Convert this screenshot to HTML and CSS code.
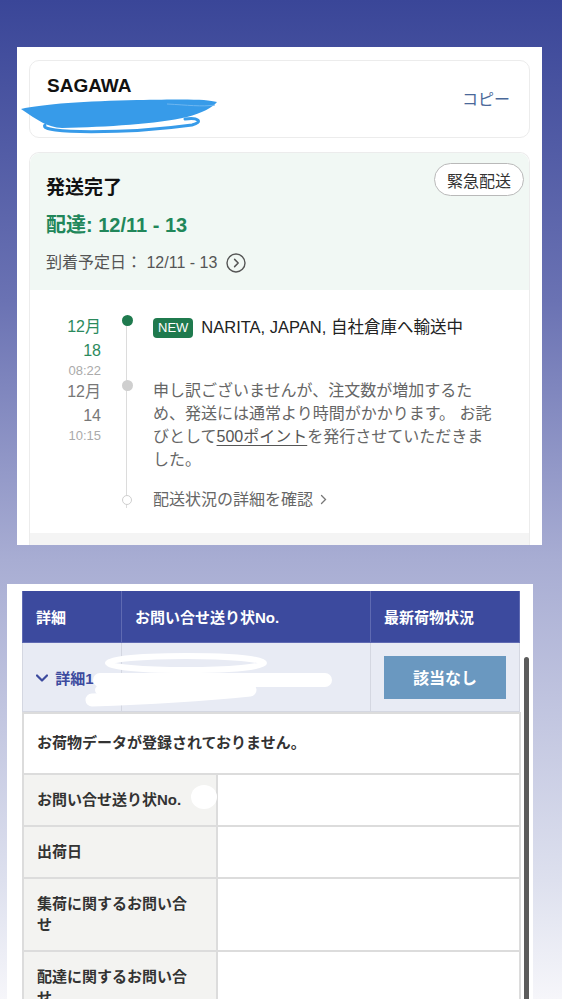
FILE: index.html
```html
<!DOCTYPE html>
<html lang="ja">
<head>
  <meta charset="UTF-8">
  <title>配送状況</title>
  <link rel="stylesheet" href="styles.css">
</head>
<body>
  <!-- first screenshot: carrier + tracking timeline -->
  <div class="shot shot-top">
    <div class="carrier-card">
      <div class="carrier-info">
        <div class="carrier-name">SAGAWA</div>
        <div class="carrier-number"></div>
      </div>
      <a class="copy-link">コピー</a>
    </div>

    <div class="status-card">
      <div class="status-head">
        <div class="status-top">
          <h2 class="status-title">発送完了</h2>
          <button class="urgent-btn">緊急配送</button>
        </div>
        <div class="status-delivery">配達: 12/11 - 13</div>
        <div class="status-eta">
          <span>到着予定日： 12/11 - 13</span>
          <svg class="eta-icon" width="20" height="20" viewBox="0 0 20 20">
            <circle cx="10" cy="10" r="9" fill="none" stroke="#555" stroke-width="1.4"/>
            <path d="M8.6 6.4 L12.2 10 L8.6 13.6" fill="none" stroke="#555" stroke-width="1.5" stroke-linecap="round" stroke-linejoin="round"/>
          </svg>
        </div>
      </div>

      <div class="timeline">
        <div class="event">
          <div class="event-date current">
            <span class="month">12月</span>
            <span class="day">18</span>
            <span class="time">08:22</span>
          </div>
          <div class="event-rail"><span class="dot dot-green"></span></div>
          <div class="event-body event-title"><span class="badge-new">NEW</span>NARITA, JAPAN, 自社倉庫へ輸送中</div>
        </div>

        <div class="event">
          <div class="event-date">
            <span class="month">12月</span>
            <span class="day">14</span>
            <span class="time">10:15</span>
          </div>
          <div class="event-rail"><span class="dot dot-gray"></span></div>
          <p class="event-body event-note">申し訳ございませんが、注文数が増加するた<br>め、発送には通常より時間がかかります。 お詫<br>びとして<u>500ポイント</u>を発行させていただきま<br>した。</p>
        </div>

        <div class="event event-more">
          <div class="event-date"></div>
          <div class="event-rail"><span class="dot dot-open"></span></div>
          <div class="event-body more-link">配送状況の詳細を確認
            <svg width="7" height="11" viewBox="0 0 7 11"><path d="M1.5 1.5 L5.5 5.5 L1.5 9.5" fill="none" stroke="#777" stroke-width="1.3" stroke-linecap="round"/></svg>
          </div>
        </div>
      </div>
      <div class="status-foot"></div>
    </div>

    <svg class="scribble scribble-blue" width="210" height="42" viewBox="0 0 210 42">
      <path d="M4 14 C 25 9, 70 6, 120 5 S 190 4, 200 7 C 195 13, 185 18, 170 22 C 140 29, 90 32, 45 33 C 30 32, 22 26, 4 14 Z" fill="#379be9"/>
      <path d="M28 30 C 20 39, 110 39, 175 30 C 187 27, 181 22, 168 24" fill="none" stroke="#379be9" stroke-width="3" stroke-linecap="round"/>
      <path d="M150 9 C 170 10, 185 12, 198 10" fill="none" stroke="#6db6f0" stroke-width="1"/>
    </svg>
  </div>

  <!-- second screenshot: carrier site table -->
  <div class="shot shot-bottom">
    <table class="summary">
      <colgroup><col class="c-detail"><col class="c-number"><col class="c-state"></colgroup>
      <thead>
        <tr>
          <th>詳細</th>
          <th>お問い合せ送り状No.</th>
          <th>最新荷物状況</th>
        </tr>
      </thead>
      <tbody>
        <tr>
          <td class="detail-toggle">
            <svg width="12" height="8" viewBox="0 0 12 8"><path d="M1 1.5 L6 6.5 L11 1.5" fill="none" stroke="#3c4a9e" stroke-width="2.2" stroke-linecap="round" stroke-linejoin="round"/></svg>
            <span>詳細1</span>
          </td>
          <td></td>
          <td><button class="state-btn">該当なし</button></td>
        </tr>
      </tbody>
    </table>

    <table class="detail">
      <colgroup><col class="c-label"><col class="c-value"></colgroup>
      <tr><td class="message" colspan="2">お荷物データが登録されておりません。</td></tr>
      <tr><th>お問い合せ送り状No.</th><td></td></tr>
      <tr><th>出荷日</th><td></td></tr>
      <tr><th>集荷に関するお問い合せ</th><td></td></tr>
      <tr><th>配達に関するお問い合せ</th><td></td></tr>
    </table>

    <div class="scrollbar"></div>

    <svg class="scribble scribble-white" width="526" height="420" viewBox="0 0 526 420">
      <ellipse cx="179" cy="79" rx="78" ry="7" fill="none" stroke="#fff" stroke-width="6"/>
      <path d="M93 96 L318 96" stroke="#fff" stroke-width="14" stroke-linecap="round"/>
      <path d="M93 106 L233 104" stroke="#fff" stroke-width="10" stroke-linecap="round"/>
      <path d="M85 116 C 143 114, 213 109, 243 106" stroke="#fff" stroke-width="13" fill="none" stroke-linecap="round"/>
      <ellipse cx="197" cy="213" rx="13" ry="12" fill="#fff"/>
    </svg>
  </div>
</body>
</html>
```

FILE: styles.css
```css
html,
body {
  height: 999px;
}

html {
  background: linear-gradient(180deg, #3a4698 0, #6a72b3 300px, #a8add3 560px, #dde0ee 880px, #f6f6fa 999px);
}

body {
  margin: 0;
  overflow: hidden;
  font-family: "Liberation Sans", "Noto Sans CJK JP", sans-serif;
  color: #222;
}

.shot {
  position: relative;
  background: #fff;
  box-sizing: border-box;
}

.scribble {
  position: absolute;
  pointer-events: none;
}

/* top screenshot */
.shot-top {
  margin: 47px 0 0 17px;
  width: 525px;
  height: 498px;
  padding: 13px 12px 0;
  overflow: hidden;
}

.scribble-blue {
  left: 0;
  top: 48px;
}

.carrier-card {
  display: flex;
  align-items: center;
  justify-content: space-between;
  border: 1px solid #ececec;
  border-radius: 10px;
  padding: 13px 19px 15px 17px;
}

.carrier-name {
  font-size: 19px;
  font-weight: bold;
  line-height: 24px;
  color: #111;
}

.carrier-number {
  height: 24px;
}

.copy-link {
  font-size: 16px;
  color: #4a6899;
}

.status-card {
  margin-top: 14px;
  border: 1px solid #ececec;
  border-bottom: none;
  border-radius: 10px 10px 0 0;
}

.status-head {
  background: #f1f8f4;
  border-radius: 10px 10px 0 0;
  padding: 10px 5px 15px 16px;
}

.status-top {
  display: flex;
  justify-content: space-between;
  align-items: flex-start;
}

.status-title {
  margin: 0;
  padding-top: 12px;
  font-size: 19px;
  line-height: 26px;
  color: #111;
}

.urgent-btn {
  height: 33px;
  padding: 0 12px;
  background: #fff;
  border: 1px solid #b9b9b9;
  border-radius: 17px;
  font-family: inherit;
  font-size: 16px;
  color: #333;
}

.status-delivery {
  margin-top: 10px;
  font-size: 20px;
  font-weight: bold;
  line-height: 28px;
  color: #21875a;
}

.status-eta {
  display: flex;
  align-items: center;
  margin-top: 12px;
  font-size: 16px;
  line-height: 24px;
  color: #555;
}

.eta-icon {
  margin-left: 9px;
}

.timeline {
  position: relative;
  padding: 25px 0 21px;
}

.timeline::before {
  content: '';
  position: absolute;
  left: 96px;
  top: 30px;
  bottom: 25px;
  width: 1px;
  background: #dcdcdc;
}

.event {
  display: flex;
  align-items: flex-start;
}

.event-date {
  width: 71px;
  flex-shrink: 0;
  display: flex;
  flex-direction: column;
  align-items: flex-end;
  color: #777;
}

.event-date.current {
  color: #2c8a5d;
}

.month {
  font-size: 16px;
  line-height: 24px;
}

.day {
  font-size: 16px;
  line-height: 23px;
}

.time {
  font-size: 13px;
  line-height: 18px;
  color: #aaa;
}

.event-rail {
  position: relative;
  width: 52px;
  flex-shrink: 0;
  display: flex;
  justify-content: center;
}

.dot {
  display: block;
  width: 11px;
  height: 11px;
  border-radius: 50%;
  box-sizing: border-box;
}

.dot-green {
  background: #1f7a4e;
}

.dot-gray {
  background: #cfcfcf;
}

.dot-open {
  width: 10px;
  height: 10px;
  margin-top: 7px;
  background: #fff;
  border: 1px solid #cfcfcf;
}

.event-body {
  flex: 1;
  margin: 0;
  font-size: 16px;
  line-height: 24px;
}

.event-title {
  font-size: 16.5px;
  color: #222;
}

.badge-new {
  display: inline-block;
  height: 20px;
  margin-right: 8px;
  padding: 0 5px;
  border-radius: 4px;
  background: #1f7a4e;
  color: #fff;
  font-size: 13px;
  line-height: 20px;
  vertical-align: 1px;
}

.event-note {
  margin-top: -1px;
  line-height: 23px;
  color: #666;
}

.event-note u {
  color: #555;
  text-underline-offset: 3px;
}

.event-more {
  margin-top: 17px;
}

.more-link {
  color: #666;
}

.more-link svg {
  margin-left: 3px;
}

.status-foot {
  height: 12px;
  background: #f4f4f4;
}

/* bottom screenshot */
.shot-bottom {
  margin: 39px 0 0 7px;
  width: 526px;
  height: 420px;
  padding: 7px 14px 0 15px;
}

.scribble-white {
  left: 0;
  top: 0;
}

.scrollbar {
  position: absolute;
  right: 4px;
  top: 73px;
  width: 5px;
  height: 400px;
  border-radius: 3px;
  background: #5c5c5c;
}

table {
  width: 497px;
  border-collapse: collapse;
  table-layout: fixed;
}

.c-detail { width: 99px; }
.c-number { width: 249px; }
.c-state { width: 149px; }
.c-label { width: 194px; }
.c-value { width: 303px; }

.summary th {
  height: 51px;
  padding: 0 13px;
  background: #3c4a9e;
  border: 1px solid #5f6ab2;
  border-top: none;
  color: #fff;
  font-size: 15px;
  text-align: left;
}

.summary td {
  height: 68px;
  padding: 0 13px;
  background: #e8ebf4;
  border: 1px solid #d4d7e1;
}

.detail-toggle {
  color: #3c4a9e;
  font-size: 15px;
  font-weight: bold;
  white-space: nowrap;
}

.detail-toggle svg {
  margin-right: 3px;
  vertical-align: 2px;
}

.state-btn {
  display: block;
  width: 122px;
  height: 43px;
  margin: 0 auto;
  border: none;
  background: #6a98c0;
  color: #fff;
  font-family: inherit;
  font-size: 16px;
  font-weight: bold;
}

.detail th,
.detail td {
  border: 2px solid #dcdcdc;
  font-size: 15px;
  color: #333;
}

.detail .message {
  height: 55px;
  padding: 0 13px 4px;
  font-weight: bold;
  background: #fff;
}

.detail th {
  padding: 14px 20px 15px 13px;
  background: #f3f3f1;
  line-height: 21px;
  text-align: left;
}

.detail td {
  background: #fff;
}
```
